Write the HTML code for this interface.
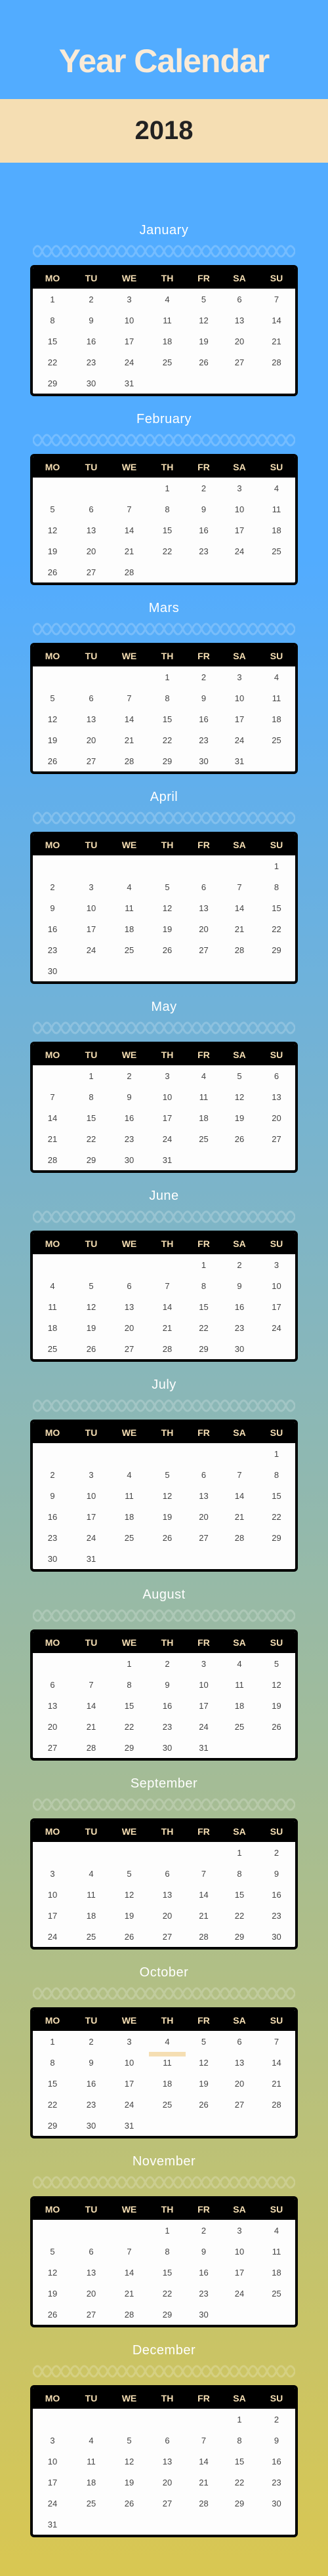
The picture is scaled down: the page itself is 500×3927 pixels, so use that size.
<!DOCTYPE html>
<html><head><meta charset="utf-8"><style>
*{margin:0;padding:0;box-sizing:border-box}
body{width:500px;height:3927px;position:relative;overflow:hidden;font-family:"Liberation Sans",Arial,sans-serif;
background:linear-gradient(to bottom,#52acff 0px,#52acff 850px,#d9c752 3927px)}
.title{position:absolute;left:0;top:0;width:500px;height:151px;text-align:center;color:#faebd7;font-weight:bold;font-size:50px;letter-spacing:-1px;line-height:186px}
.band{position:absolute;left:0;top:151px;width:500px;height:97px;background:#f5deb3;text-align:center;color:#222;font-weight:bold;font-size:40px;line-height:97px}
.m{position:absolute;left:0;width:500px}
.m h2{height:30px;line-height:30px;text-align:center;color:#fff;font-weight:normal;font-size:20px;letter-spacing:.5px}
.m svg{display:block;margin:7px 0 0 50px}
.cal{position:relative;margin:11px 0 0 46px;width:408px;border:4px solid #000;border-radius:6px;background:#fdfdfd;overflow:hidden}
table{border-collapse:collapse;width:400px;table-layout:fixed}
th{background:#000;color:#f5deb3;font-size:14px;font-weight:bold;height:32px;padding:0}
td{height:32px;text-align:center;font-size:13px;color:#444;padding:0}
.bar{position:absolute;left:177px;top:64px;width:56px;height:7px;background:#f5deb3}
</style></head><body>
<svg width="0" height="0" style="position:absolute"><defs>
<pattern id="w" patternUnits="userSpaceOnUse" width="28.5714" height="20">
<path d="M0,10 Q7.14,-6 14.29,10 Q21.43,26 28.57,10 M0,10 Q7.14,26 14.29,10 Q21.43,-6 28.57,10" fill="none" stroke="rgba(255,255,255,0.2)" stroke-width="3"/>
</pattern></defs></svg>
<div class="title">Year Calendar</div>
<div class="band">2018</div>

<div class="m" style="top:336px"><h2>January</h2><svg width="400" height="20"><rect width="400" height="20" fill="url(#w)"/></svg><div class="cal"><table>
<colgroup><col style="width:60px"><col style="width:58px"><col style="width:58px"><col style="width:58px"><col style="width:53px"><col style="width:56px"><col style="width:57px"></colgroup>
<tr><th>MO</th><th>TU</th><th>WE</th><th>TH</th><th>FR</th><th>SA</th><th>SU</th></tr>
<tr><td>1</td><td>2</td><td>3</td><td>4</td><td>5</td><td>6</td><td>7</td></tr>
<tr><td>8</td><td>9</td><td>10</td><td>11</td><td>12</td><td>13</td><td>14</td></tr>
<tr><td>15</td><td>16</td><td>17</td><td>18</td><td>19</td><td>20</td><td>21</td></tr>
<tr><td>22</td><td>23</td><td>24</td><td>25</td><td>26</td><td>27</td><td>28</td></tr>
<tr><td>29</td><td>30</td><td>31</td><td></td><td></td><td></td><td></td></tr>
</table></div></div>

<div class="m" style="top:624px"><h2>February</h2><svg width="400" height="20"><rect width="400" height="20" fill="url(#w)"/></svg><div class="cal"><table>
<colgroup><col style="width:60px"><col style="width:58px"><col style="width:58px"><col style="width:58px"><col style="width:53px"><col style="width:56px"><col style="width:57px"></colgroup>
<tr><th>MO</th><th>TU</th><th>WE</th><th>TH</th><th>FR</th><th>SA</th><th>SU</th></tr>
<tr><td></td><td></td><td></td><td>1</td><td>2</td><td>3</td><td>4</td></tr>
<tr><td>5</td><td>6</td><td>7</td><td>8</td><td>9</td><td>10</td><td>11</td></tr>
<tr><td>12</td><td>13</td><td>14</td><td>15</td><td>16</td><td>17</td><td>18</td></tr>
<tr><td>19</td><td>20</td><td>21</td><td>22</td><td>23</td><td>24</td><td>25</td></tr>
<tr><td>26</td><td>27</td><td>28</td><td></td><td></td><td></td><td></td></tr>
</table></div></div>

<div class="m" style="top:912px"><h2>Mars</h2><svg width="400" height="20"><rect width="400" height="20" fill="url(#w)"/></svg><div class="cal"><table>
<colgroup><col style="width:60px"><col style="width:58px"><col style="width:58px"><col style="width:58px"><col style="width:53px"><col style="width:56px"><col style="width:57px"></colgroup>
<tr><th>MO</th><th>TU</th><th>WE</th><th>TH</th><th>FR</th><th>SA</th><th>SU</th></tr>
<tr><td></td><td></td><td></td><td>1</td><td>2</td><td>3</td><td>4</td></tr>
<tr><td>5</td><td>6</td><td>7</td><td>8</td><td>9</td><td>10</td><td>11</td></tr>
<tr><td>12</td><td>13</td><td>14</td><td>15</td><td>16</td><td>17</td><td>18</td></tr>
<tr><td>19</td><td>20</td><td>21</td><td>22</td><td>23</td><td>24</td><td>25</td></tr>
<tr><td>26</td><td>27</td><td>28</td><td>29</td><td>30</td><td>31</td><td></td></tr>
</table></div></div>

<div class="m" style="top:1200px"><h2>April</h2><svg width="400" height="20"><rect width="400" height="20" fill="url(#w)"/></svg><div class="cal"><table>
<colgroup><col style="width:60px"><col style="width:58px"><col style="width:58px"><col style="width:58px"><col style="width:53px"><col style="width:56px"><col style="width:57px"></colgroup>
<tr><th>MO</th><th>TU</th><th>WE</th><th>TH</th><th>FR</th><th>SA</th><th>SU</th></tr>
<tr><td></td><td></td><td></td><td></td><td></td><td></td><td>1</td></tr>
<tr><td>2</td><td>3</td><td>4</td><td>5</td><td>6</td><td>7</td><td>8</td></tr>
<tr><td>9</td><td>10</td><td>11</td><td>12</td><td>13</td><td>14</td><td>15</td></tr>
<tr><td>16</td><td>17</td><td>18</td><td>19</td><td>20</td><td>21</td><td>22</td></tr>
<tr><td>23</td><td>24</td><td>25</td><td>26</td><td>27</td><td>28</td><td>29</td></tr>
<tr><td>30</td><td></td><td></td><td></td><td></td><td></td><td></td></tr>
</table></div></div>

<div class="m" style="top:1520px"><h2>May</h2><svg width="400" height="20"><rect width="400" height="20" fill="url(#w)"/></svg><div class="cal"><table>
<colgroup><col style="width:60px"><col style="width:58px"><col style="width:58px"><col style="width:58px"><col style="width:53px"><col style="width:56px"><col style="width:57px"></colgroup>
<tr><th>MO</th><th>TU</th><th>WE</th><th>TH</th><th>FR</th><th>SA</th><th>SU</th></tr>
<tr><td></td><td>1</td><td>2</td><td>3</td><td>4</td><td>5</td><td>6</td></tr>
<tr><td>7</td><td>8</td><td>9</td><td>10</td><td>11</td><td>12</td><td>13</td></tr>
<tr><td>14</td><td>15</td><td>16</td><td>17</td><td>18</td><td>19</td><td>20</td></tr>
<tr><td>21</td><td>22</td><td>23</td><td>24</td><td>25</td><td>26</td><td>27</td></tr>
<tr><td>28</td><td>29</td><td>30</td><td>31</td><td></td><td></td><td></td></tr>
</table></div></div>

<div class="m" style="top:1808px"><h2>June</h2><svg width="400" height="20"><rect width="400" height="20" fill="url(#w)"/></svg><div class="cal"><table>
<colgroup><col style="width:60px"><col style="width:58px"><col style="width:58px"><col style="width:58px"><col style="width:53px"><col style="width:56px"><col style="width:57px"></colgroup>
<tr><th>MO</th><th>TU</th><th>WE</th><th>TH</th><th>FR</th><th>SA</th><th>SU</th></tr>
<tr><td></td><td></td><td></td><td></td><td>1</td><td>2</td><td>3</td></tr>
<tr><td>4</td><td>5</td><td>6</td><td>7</td><td>8</td><td>9</td><td>10</td></tr>
<tr><td>11</td><td>12</td><td>13</td><td>14</td><td>15</td><td>16</td><td>17</td></tr>
<tr><td>18</td><td>19</td><td>20</td><td>21</td><td>22</td><td>23</td><td>24</td></tr>
<tr><td>25</td><td>26</td><td>27</td><td>28</td><td>29</td><td>30</td><td></td></tr>
</table></div></div>

<div class="m" style="top:2096px"><h2>July</h2><svg width="400" height="20"><rect width="400" height="20" fill="url(#w)"/></svg><div class="cal"><table>
<colgroup><col style="width:60px"><col style="width:58px"><col style="width:58px"><col style="width:58px"><col style="width:53px"><col style="width:56px"><col style="width:57px"></colgroup>
<tr><th>MO</th><th>TU</th><th>WE</th><th>TH</th><th>FR</th><th>SA</th><th>SU</th></tr>
<tr><td></td><td></td><td></td><td></td><td></td><td></td><td>1</td></tr>
<tr><td>2</td><td>3</td><td>4</td><td>5</td><td>6</td><td>7</td><td>8</td></tr>
<tr><td>9</td><td>10</td><td>11</td><td>12</td><td>13</td><td>14</td><td>15</td></tr>
<tr><td>16</td><td>17</td><td>18</td><td>19</td><td>20</td><td>21</td><td>22</td></tr>
<tr><td>23</td><td>24</td><td>25</td><td>26</td><td>27</td><td>28</td><td>29</td></tr>
<tr><td>30</td><td>31</td><td></td><td></td><td></td><td></td><td></td></tr>
</table></div></div>

<div class="m" style="top:2416px"><h2>August</h2><svg width="400" height="20"><rect width="400" height="20" fill="url(#w)"/></svg><div class="cal"><table>
<colgroup><col style="width:60px"><col style="width:58px"><col style="width:58px"><col style="width:58px"><col style="width:53px"><col style="width:56px"><col style="width:57px"></colgroup>
<tr><th>MO</th><th>TU</th><th>WE</th><th>TH</th><th>FR</th><th>SA</th><th>SU</th></tr>
<tr><td></td><td></td><td>1</td><td>2</td><td>3</td><td>4</td><td>5</td></tr>
<tr><td>6</td><td>7</td><td>8</td><td>9</td><td>10</td><td>11</td><td>12</td></tr>
<tr><td>13</td><td>14</td><td>15</td><td>16</td><td>17</td><td>18</td><td>19</td></tr>
<tr><td>20</td><td>21</td><td>22</td><td>23</td><td>24</td><td>25</td><td>26</td></tr>
<tr><td>27</td><td>28</td><td>29</td><td>30</td><td>31</td><td></td><td></td></tr>
</table></div></div>

<div class="m" style="top:2704px"><h2>September</h2><svg width="400" height="20"><rect width="400" height="20" fill="url(#w)"/></svg><div class="cal"><table>
<colgroup><col style="width:60px"><col style="width:58px"><col style="width:58px"><col style="width:58px"><col style="width:53px"><col style="width:56px"><col style="width:57px"></colgroup>
<tr><th>MO</th><th>TU</th><th>WE</th><th>TH</th><th>FR</th><th>SA</th><th>SU</th></tr>
<tr><td></td><td></td><td></td><td></td><td></td><td>1</td><td>2</td></tr>
<tr><td>3</td><td>4</td><td>5</td><td>6</td><td>7</td><td>8</td><td>9</td></tr>
<tr><td>10</td><td>11</td><td>12</td><td>13</td><td>14</td><td>15</td><td>16</td></tr>
<tr><td>17</td><td>18</td><td>19</td><td>20</td><td>21</td><td>22</td><td>23</td></tr>
<tr><td>24</td><td>25</td><td>26</td><td>27</td><td>28</td><td>29</td><td>30</td></tr>
</table></div></div>

<div class="m" style="top:2992px"><h2>October</h2><svg width="400" height="20"><rect width="400" height="20" fill="url(#w)"/></svg><div class="cal"><table>
<colgroup><col style="width:60px"><col style="width:58px"><col style="width:58px"><col style="width:58px"><col style="width:53px"><col style="width:56px"><col style="width:57px"></colgroup>
<tr><th>MO</th><th>TU</th><th>WE</th><th>TH</th><th>FR</th><th>SA</th><th>SU</th></tr>
<tr><td>1</td><td>2</td><td>3</td><td>4</td><td>5</td><td>6</td><td>7</td></tr>
<tr><td>8</td><td>9</td><td>10</td><td>11</td><td>12</td><td>13</td><td>14</td></tr>
<tr><td>15</td><td>16</td><td>17</td><td>18</td><td>19</td><td>20</td><td>21</td></tr>
<tr><td>22</td><td>23</td><td>24</td><td>25</td><td>26</td><td>27</td><td>28</td></tr>
<tr><td>29</td><td>30</td><td>31</td><td></td><td></td><td></td><td></td></tr>
</table><div class="bar"></div></div></div>

<div class="m" style="top:3280px"><h2>November</h2><svg width="400" height="20"><rect width="400" height="20" fill="url(#w)"/></svg><div class="cal"><table>
<colgroup><col style="width:60px"><col style="width:58px"><col style="width:58px"><col style="width:58px"><col style="width:53px"><col style="width:56px"><col style="width:57px"></colgroup>
<tr><th>MO</th><th>TU</th><th>WE</th><th>TH</th><th>FR</th><th>SA</th><th>SU</th></tr>
<tr><td></td><td></td><td></td><td>1</td><td>2</td><td>3</td><td>4</td></tr>
<tr><td>5</td><td>6</td><td>7</td><td>8</td><td>9</td><td>10</td><td>11</td></tr>
<tr><td>12</td><td>13</td><td>14</td><td>15</td><td>16</td><td>17</td><td>18</td></tr>
<tr><td>19</td><td>20</td><td>21</td><td>22</td><td>23</td><td>24</td><td>25</td></tr>
<tr><td>26</td><td>27</td><td>28</td><td>29</td><td>30</td><td></td><td></td></tr>
</table></div></div>

<div class="m" style="top:3568px"><h2>December</h2><svg width="400" height="20"><rect width="400" height="20" fill="url(#w)"/></svg><div class="cal"><table>
<colgroup><col style="width:60px"><col style="width:58px"><col style="width:58px"><col style="width:58px"><col style="width:53px"><col style="width:56px"><col style="width:57px"></colgroup>
<tr><th>MO</th><th>TU</th><th>WE</th><th>TH</th><th>FR</th><th>SA</th><th>SU</th></tr>
<tr><td></td><td></td><td></td><td></td><td></td><td>1</td><td>2</td></tr>
<tr><td>3</td><td>4</td><td>5</td><td>6</td><td>7</td><td>8</td><td>9</td></tr>
<tr><td>10</td><td>11</td><td>12</td><td>13</td><td>14</td><td>15</td><td>16</td></tr>
<tr><td>17</td><td>18</td><td>19</td><td>20</td><td>21</td><td>22</td><td>23</td></tr>
<tr><td>24</td><td>25</td><td>26</td><td>27</td><td>28</td><td>29</td><td>30</td></tr>
<tr><td>31</td><td></td><td></td><td></td><td></td><td></td><td></td></tr>
</table></div></div>
</body></html>
